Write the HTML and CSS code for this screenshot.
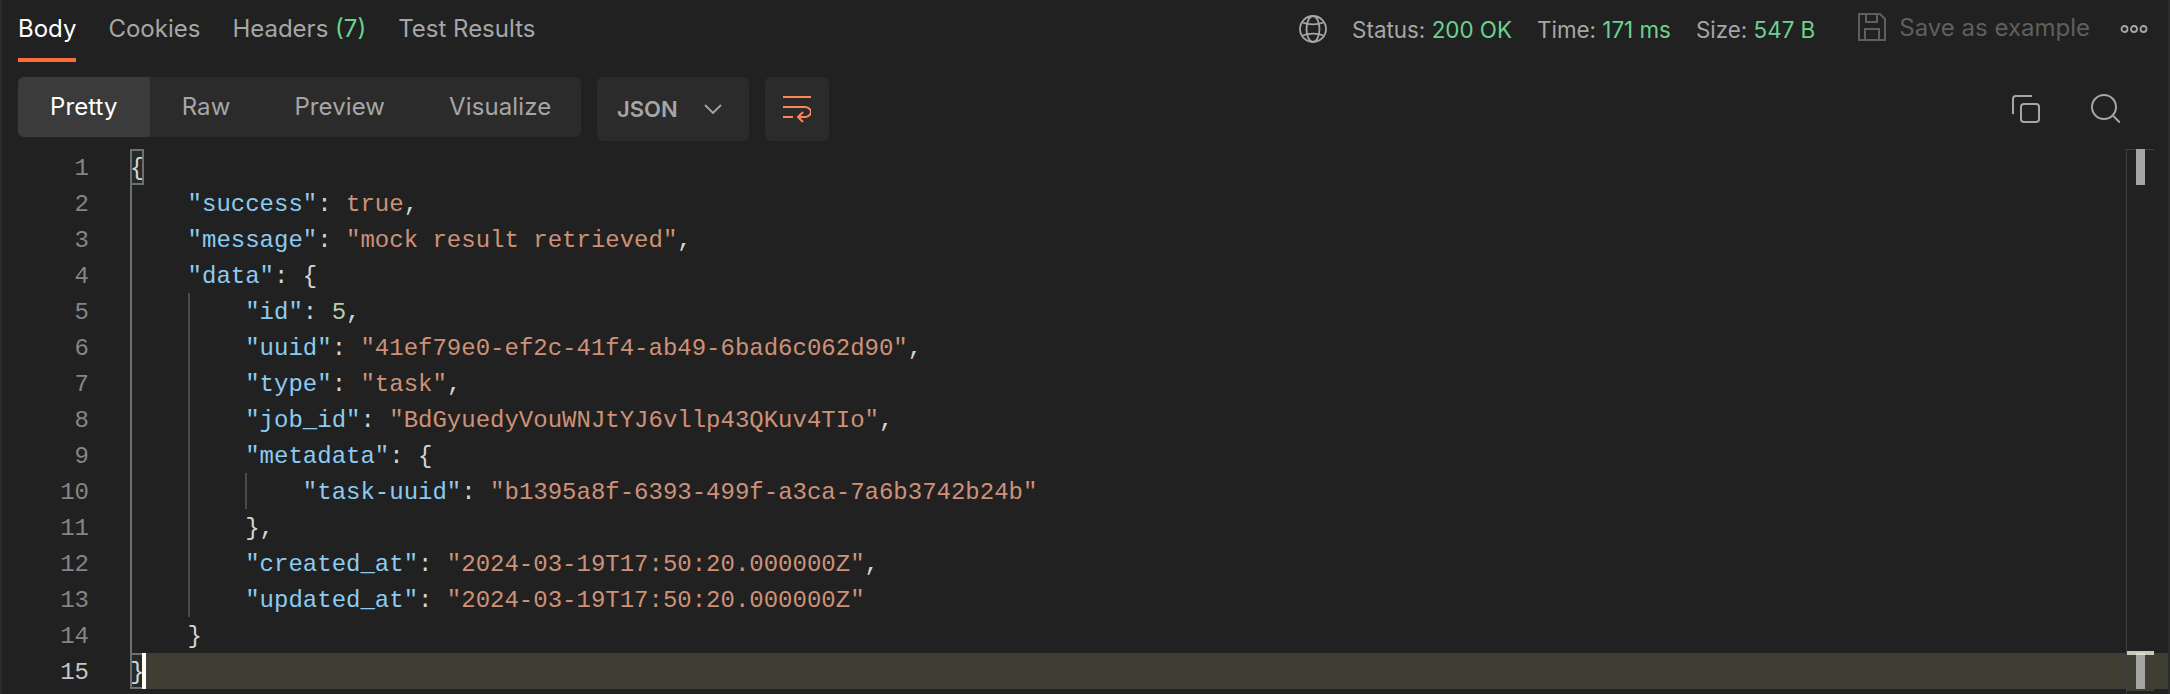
FILE: index.html
```html
<!DOCTYPE html>
<html lang="en">
<head>
<meta charset="utf-8">
<title>Response</title>
<link rel="stylesheet" href="styles.css">
</head>
<body>
<div class="app">
  <header class="topbar">
    <nav class="tabs">
      <span class="tab active">Body</span>
      <span class="tab">Cookies</span>
      <span class="tab">Headers <em class="ok">(7)</em></span>
      <span class="tab">Test Results</span>
    </nav>
    <div class="meta">
      <svg class="globe" width="28" height="28" viewBox="0 0 28 28" fill="none" stroke="#a6a6a6" stroke-width="1.8"><circle cx="14" cy="14" r="13"/><ellipse cx="14" cy="14" rx="6.500" ry="13"/><path d="M3.500 7.500c6 2.500 15 2.500 21 0M3.500 20.500c6-2.500 15-2.500 21 0"/></svg>
      <span class="stat">Status: <b class="ok">200 OK</b></span>
      <span class="stat">Time: <b class="ok">171 ms</b></span>
      <span class="stat">Size: <b class="ok">547 B</b></span>
      <div class="save-group">
        <svg class="save" width="28" height="28" viewBox="0 0 28 28" fill="none" stroke="#5f5f5f" stroke-width="2"><path d="M1 1h21l5 5v21H1z"/><path d="M8 1v8h11V1M7 27V16h14v11"/></svg>
        <span class="save-label">Save as example</span>
      </div>
      <svg class="dots" width="28" height="10" viewBox="0 0 28 10" fill="none" stroke="#a6a6a6" stroke-width="1.800"><circle cx="4.500" cy="5" r="3"/><circle cx="14" cy="5" r="3"/><circle cx="23.500" cy="5" r="3"/></svg>
    </div>
  </header>

  <div class="toolbar">
    <div class="segments">
      <span class="segment active">Pretty</span>
      <span class="segment">Raw</span>
      <span class="segment">Preview</span>
      <span class="segment">Visualize</span>
    </div>
    <div class="select">
      <span>JSON</span>
      <svg width="18" height="10" viewBox="0 0 18 10" fill="none" stroke="#a6a6a6" stroke-width="1.800"><path d="M1 1l8 8 8-8"/></svg>
    </div>
    <div class="wrap-btn">
      <svg width="28" height="27" viewBox="0 0 28 27" fill="none" stroke="#ff8559" stroke-width="2"><path d="M0 1h28M0 11h22c3 0 6 2.500 6 5s-3 5-6 5h-7M0 21h10M20 16l-5 5 5 5"/></svg>
    </div>
    <div class="tools">
      <svg width="28" height="29" viewBox="0 0 28 29" fill="none" stroke="#a6a6a6" stroke-width="2"><path d="M20 2H4a3 3 0 0 0-3 3v15"/><rect x="9" y="10" width="18" height="18" rx="3"/></svg>
      <svg width="29" height="29" viewBox="0 0 29 29" fill="none" stroke="#a6a6a6" stroke-width="2"><circle cx="13" cy="13" r="12"/><path d="M22.300 22l6.700 6.700"/></svg>
    </div>
  </div>

  <main class="editor">
    <div class="gutter">
      <div>1</div><div>2</div><div>3</div><div>4</div><div>5</div>
      <div>6</div><div>7</div><div>8</div><div>9</div><div>10</div>
      <div>11</div><div>12</div><div>13</div><div>14</div><div class="current">15</div>
    </div>
    <div class="code">
      <i class="guide g0"></i>
      <i class="guide g1"></i>
      <i class="guide g2"></i>
      <div class="line"><span class="match">{</span></div>
      <div class="line">    <span class="key">"success"</span>: <span class="str">true</span>,</div>
      <div class="line">    <span class="key">"message"</span>: <span class="str">"mock result retrieved"</span>,</div>
      <div class="line">    <span class="key">"data"</span>: {</div>
      <div class="line">        <span class="key">"id"</span>: <span class="num">5</span>,</div>
      <div class="line">        <span class="key">"uuid"</span>: <span class="str">"41ef79e0-ef2c-41f4-ab49-6bad6c062d90"</span>,</div>
      <div class="line">        <span class="key">"type"</span>: <span class="str">"task"</span>,</div>
      <div class="line">        <span class="key">"job_id"</span>: <span class="str">"BdGyuedyVouWNJtYJ6vllp43QKuv4TIo"</span>,</div>
      <div class="line">        <span class="key">"metadata"</span>: {</div>
      <div class="line">            <span class="key">"task-uuid"</span>: <span class="str">"b1395a8f-6393-499f-a3ca-7a6b3742b24b"</span></div>
      <div class="line">        },</div>
      <div class="line">        <span class="key">"created_at"</span>: <span class="str">"2024-03-19T17:50:20.000000Z"</span>,</div>
      <div class="line">        <span class="key">"updated_at"</span>: <span class="str">"2024-03-19T17:50:20.000000Z"</span></div>
      <div class="line">    }</div>
      <div class="line current"><span class="match">}</span><span class="caret"></span></div>
    </div>
    <div class="ruler">
      <i class="ruler-mark"></i>
      <i class="slider top"></i>
      <i class="slider bottom"></i>
    </div>
  </main>
</div>
</body>
</html>
```
FILE: styles.css
```css
* { box-sizing: border-box; }
html, body { margin: 0; height: 100%; }
body { background: #212121; overflow: hidden; }
.app {
  width: 2170px; height: 694px; background: #212121;
  border-left: 2px solid #2b2b2b; border-right: 2px solid #2b2b2b;
  font-family: Inter, "Liberation Sans", sans-serif; color: #a6a6a6;
}
.ok { color: #6bd28f; font-style: normal; font-weight: 400; }

.topbar { height: 62px; display: flex; justify-content: space-between; padding: 0 20px 0 16px; }
.tabs { display: flex; gap: 32px; }
.tab { font-size: 24px; line-height: 58px; height: 62px; border-bottom: 4px solid transparent; white-space: pre; }
.tab.active { color: #fff; border-bottom-color: #ff6c37; }
.meta { display: flex; align-items: center; font-size: 22.4px; height: 58px; }
.globe { margin-right: 25px; }
.stat { margin-right: 25px; white-space: pre; }
.save-group { display: flex; align-items: center; gap: 13px; margin: 0 30px 0 18px; padding-bottom: 4px; }
.save-label { color: #5f5f5f; font-size: 24px; }

.toolbar { height: 87px; display: flex; align-items: flex-start; padding: 15px 0 0 16px; }
.segments { display: flex; width: 563px; height: 60px; background: #2b2b2b; border-radius: 6px; overflow: hidden; font-size: 24px; letter-spacing: 0.1px; }
.segment { line-height: 60px; padding: 0 32px; white-space: nowrap; }
.segment.active { color: #fff; background: #3b3b3b; }
.select {
  margin-left: 16px; width: 152px; height: 64px; background: #2b2b2b; border-radius: 6px;
  display: flex; align-items: center; justify-content: space-between; padding: 0 27px 0 20px;
  font-size: 22px; font-weight: 600;
}
.wrap-btn {
  margin-left: 16px; width: 64px; height: 64px; background: #2b2b2b; border-radius: 6px;
  display: flex; align-items: center; justify-content: center;
}
.tools { margin-left: auto; margin-right: 48px; display: flex; gap: 51px; padding-top: 17px; }

.editor { position: relative; display: flex; height: 545px; font-family: "Liberation Mono", "DejaVu Sans Mono", monospace; font-size: 24px; line-height: 40px; }
.gutter { width: 128px; padding-right: 41px; text-align: right; color: #858585; flex: none; }
.gutter div { height: 36px; }
.gutter .current { color: #c6c6c6; }
.code { position: relative; flex: 1; color: #d4d4d4; }
.line { height: 36px; white-space: pre; }
.line.current { background: #3e3e32; }
.key { color: #8bcbf2; }
.str { color: #ce9178; }
.num { color: #b5cea8; }
.match { display: inline-block; width: 14px; height: 36px; line-height: 40px; background: #262b27; outline: 2px solid #6f6f6f; outline-offset: -2px; vertical-align: top; }
.caret { display: inline-block; width: 4px; height: 36px; margin-left: -2px; background: #fff; vertical-align: top; }
.guide { position: absolute; width: 2px; }
.g0 { left: 0; top: 36px; height: 468px; background: #707070; }
.g1 { left: 58px; top: 144px; height: 324px; background: #4a4a4a; }
.g2 { left: 115px; top: 324px; height: 36px; background: #4a4a4a; }
.ruler { position: absolute; left: 2124px; top: 0; width: 28px; height: 545px; border-left: 1px solid #404040; border-top: 1px solid #404040; }
.ruler-mark { position: absolute; left: 0; top: 501px; width: 27px; height: 40px; background: #3e3e32; border-top: 4px solid #c9c9b8; }
.slider { position: absolute; left: 9px; width: 9px; height: 36px; background: #a5a5a5; }
.slider.top { top: -1px; }
.slider.bottom { top: 503px; border-top: 2px solid #dcdcd0; }
```
